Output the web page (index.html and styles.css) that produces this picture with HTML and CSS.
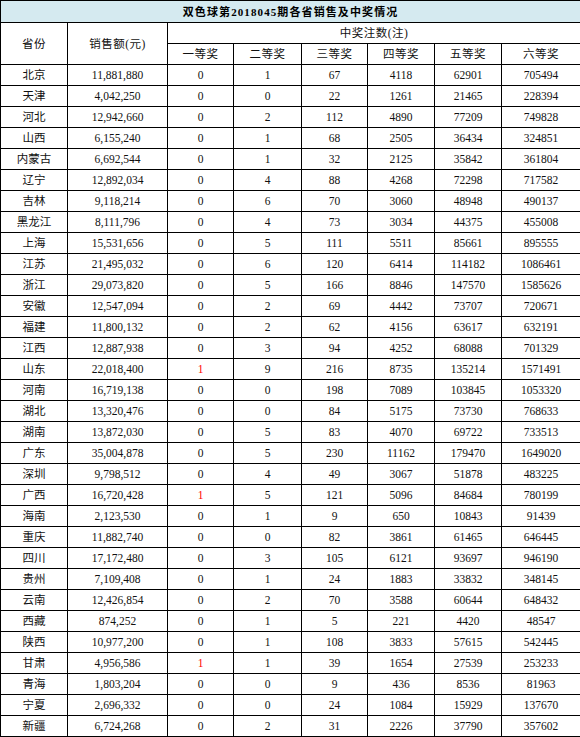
FILE: index.html
```html
<!DOCTYPE html>
<html lang="zh">
<head>
<meta charset="utf-8">
<title>双色球第2018045期各省销售及中奖情况</title>
<link rel="stylesheet" href="styles.css">
</head>
<body>
<table class="lottery">
<colgroup>
<col class="c1"><col class="c2"><col class="c3"><col class="c4"><col class="c5"><col class="c6"><col class="c7"><col class="c8">
</colgroup>
<thead>
<tr class="title-row"><th colspan="8" class="title">双色球第2018045期各省销售及中奖情况</th></tr>
<tr class="head-row"><th rowspan="2">省份</th><th rowspan="2">销售额(元)</th><th colspan="6">中奖注数(注)</th></tr>
<tr class="head-row"><th>一等奖</th><th>二等奖</th><th>三等奖</th><th>四等奖</th><th>五等奖</th><th>六等奖</th></tr>
</thead>
<tbody>
<tr><td>北京</td><td>11,881,880</td><td>0</td><td>1</td><td>67</td><td>4118</td><td>62901</td><td>705494</td></tr>
<tr><td>天津</td><td>4,042,250</td><td>0</td><td>0</td><td>22</td><td>1261</td><td>21465</td><td>228394</td></tr>
<tr><td>河北</td><td>12,942,660</td><td>0</td><td>2</td><td>112</td><td>4890</td><td>77209</td><td>749828</td></tr>
<tr><td>山西</td><td>6,155,240</td><td>0</td><td>1</td><td>68</td><td>2505</td><td>36434</td><td>324851</td></tr>
<tr><td>内蒙古</td><td>6,692,544</td><td>0</td><td>1</td><td>32</td><td>2125</td><td>35842</td><td>361804</td></tr>
<tr><td>辽宁</td><td>12,892,034</td><td>0</td><td>4</td><td>88</td><td>4268</td><td>72298</td><td>717582</td></tr>
<tr><td>吉林</td><td>9,118,214</td><td>0</td><td>6</td><td>70</td><td>3060</td><td>48948</td><td>490137</td></tr>
<tr><td>黑龙江</td><td>8,111,796</td><td>0</td><td>4</td><td>73</td><td>3034</td><td>44375</td><td>455008</td></tr>
<tr><td>上海</td><td>15,531,656</td><td>0</td><td>5</td><td>111</td><td>5511</td><td>85661</td><td>895555</td></tr>
<tr><td>江苏</td><td>21,495,032</td><td>0</td><td>6</td><td>120</td><td>6414</td><td>114182</td><td>1086461</td></tr>
<tr><td>浙江</td><td>29,073,820</td><td>0</td><td>5</td><td>166</td><td>8846</td><td>147570</td><td>1585626</td></tr>
<tr><td>安徽</td><td>12,547,094</td><td>0</td><td>2</td><td>69</td><td>4442</td><td>73707</td><td>720671</td></tr>
<tr><td>福建</td><td>11,800,132</td><td>0</td><td>2</td><td>62</td><td>4156</td><td>63617</td><td>632191</td></tr>
<tr><td>江西</td><td>12,887,938</td><td>0</td><td>3</td><td>94</td><td>4252</td><td>68088</td><td>701329</td></tr>
<tr><td>山东</td><td>22,018,400</td><td class="win">1</td><td>9</td><td>216</td><td>8735</td><td>135214</td><td>1571491</td></tr>
<tr><td>河南</td><td>16,719,138</td><td>0</td><td>0</td><td>198</td><td>7089</td><td>103845</td><td>1053320</td></tr>
<tr><td>湖北</td><td>13,320,476</td><td>0</td><td>0</td><td>84</td><td>5175</td><td>73730</td><td>768633</td></tr>
<tr><td>湖南</td><td>13,872,030</td><td>0</td><td>5</td><td>83</td><td>4070</td><td>69722</td><td>733513</td></tr>
<tr><td>广东</td><td>35,004,878</td><td>0</td><td>5</td><td>230</td><td>11162</td><td>179470</td><td>1649020</td></tr>
<tr><td>深圳</td><td>9,798,512</td><td>0</td><td>4</td><td>49</td><td>3067</td><td>51878</td><td>483225</td></tr>
<tr><td>广西</td><td>16,720,428</td><td class="win">1</td><td>5</td><td>121</td><td>5096</td><td>84684</td><td>780199</td></tr>
<tr><td>海南</td><td>2,123,530</td><td>0</td><td>1</td><td>9</td><td>650</td><td>10843</td><td>91439</td></tr>
<tr><td>重庆</td><td>11,882,740</td><td>0</td><td>0</td><td>82</td><td>3861</td><td>61465</td><td>646445</td></tr>
<tr><td>四川</td><td>17,172,480</td><td>0</td><td>3</td><td>105</td><td>6121</td><td>93697</td><td>946190</td></tr>
<tr><td>贵州</td><td>7,109,408</td><td>0</td><td>1</td><td>24</td><td>1883</td><td>33832</td><td>348145</td></tr>
<tr><td>云南</td><td>12,426,854</td><td>0</td><td>2</td><td>70</td><td>3588</td><td>60644</td><td>648432</td></tr>
<tr><td>西藏</td><td>874,252</td><td>0</td><td>1</td><td>5</td><td>221</td><td>4420</td><td>48547</td></tr>
<tr><td>陕西</td><td>10,977,200</td><td>0</td><td>1</td><td>108</td><td>3833</td><td>57615</td><td>542445</td></tr>
<tr><td>甘肃</td><td>4,956,586</td><td class="win">1</td><td>1</td><td>39</td><td>1654</td><td>27539</td><td>253233</td></tr>
<tr><td>青海</td><td>1,803,204</td><td>0</td><td>0</td><td>9</td><td>436</td><td>8536</td><td>81963</td></tr>
<tr><td>宁夏</td><td>2,696,332</td><td>0</td><td>0</td><td>24</td><td>1084</td><td>15929</td><td>137670</td></tr>
<tr><td>新疆</td><td>6,724,268</td><td>0</td><td>2</td><td>31</td><td>2226</td><td>37790</td><td>357602</td></tr>
</tbody>
</table>
</body>
</html>
```
FILE: styles.css
```css
html, body {
  margin: 0;
  padding: 0;
  background: #ffffff;
}

.lottery {
  border-collapse: collapse;
  table-layout: fixed;
  width: 580px;
  font-family: "Liberation Serif", "Noto Sans CJK SC", serif;
  font-size: 11.5px;
  color: #111111;
}

.c1 { width: 67px; }
.c2 { width: 100px; }
.c3 { width: 66px; }
.c4 { width: 68px; }
.c5 { width: 66px; }
.c6 { width: 67px; }
.c7 { width: 67px; }
.c8 { width: 79px; }

.lottery th,
.lottery td {
  border: 1px solid #000000;
  padding: 0;
  text-align: center;
  vertical-align: middle;
  line-height: 14px;
  font-weight: normal;
  white-space: nowrap;
  overflow: hidden;
}

.lottery th {
  letter-spacing: 0.5px;
}

.lottery tr {
  height: 21px;
}

.lottery .title-row {
  height: 22px;
}

.lottery .title {
  background: #d5eaf0;
  font-weight: bold;
  font-size: 11px;
  letter-spacing: 1.1px;
  color: #000000;
}

.lottery .win {
  color: #ff0000;
}
```
